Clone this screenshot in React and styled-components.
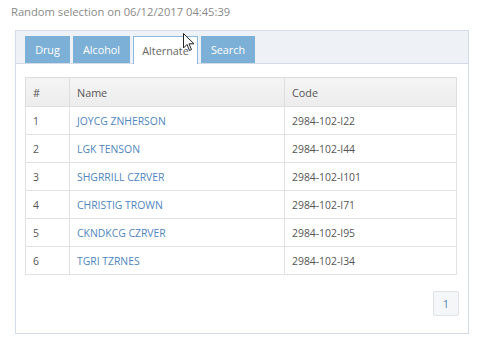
import React from "react";
import styled, { createGlobalStyle } from "styled-components";

const GlobalStyle = createGlobalStyle`
  body {
    margin: 0;
    background: #fff;
    font-family: "Open Sans", "Liberation Sans", sans-serif;
  }
`;

const Page = styled.div`
  position: relative;
  width: 497px;
  height: 349px;
  padding: 3px 0 0 11px;
  box-sizing: border-box;
`;

const Title = styled.div`
  font-size: 11.2px;
  color: #8a8a8a;
  line-height: 17px;
`;

const Panel = styled.div`
  margin: 10px 0 0 4px;
  width: 454px;
  height: 304px;
  box-sizing: border-box;
  border: 1px solid #d3dce8;
  display: flex;
  flex-direction: column;
`;

const TabBar = styled.div`
  height: 33px;
  box-sizing: border-box;
  background: #eef2f7;
  border-bottom: 1px solid #d3dce8;
  padding: 6px 0 0 9px;
  display: flex;
  align-items: flex-end;
  gap: 3px;
`;

const Tab = styled.div`
  width: ${(p) => p.$w}px;
  height: ${(p) => (p.$active ? "28px" : "27px")};
  margin-bottom: ${(p) => (p.$active ? "-1px" : "0")};
  box-sizing: border-box;
  display: flex;
  align-items: center;
  justify-content: center;
  font-size: 10.8px;
  color: ${(p) => (p.$active ? "#666" : "#fff")};
  background: ${(p) => (p.$active ? "#fff" : "#7cb0d6")};
  border: 1px solid ${(p) => (p.$active ? "#8dbbe0" : "#7cb0d6")};
  border-bottom: ${(p) => (p.$active ? "none" : "1px solid #7cb0d6")};
`;

const Body = styled.div`
  padding: 13px 0 0 9px;
  display: flex;
  flex-direction: column;
`;

const Table = styled.table`
  width: 432px;
  border-collapse: collapse;
  font-size: 10.4px;
  color: #555;
`;

const Th = styled.th`
  height: 29px;
  box-sizing: border-box;
  text-align: left;
  font-weight: 400;
  font-size: 10.8px;
  padding: 0 7px;
  background: linear-gradient(#f5f5f5, #ececec);
  border: 1px solid #dedede;
  width: ${(p) => p.$w}px;
`;

const Td = styled.td`
  height: 28px;
  box-sizing: border-box;
  padding: 0 7px;
  border: 1px solid #e2e2e2;
`;

const NameLink = styled.a`
  color: #4f86c0;
  text-decoration: none;
`;

const Pager = styled.div`
  display: flex;
  justify-content: flex-end;
  padding: 16px 9px 0 0;
`;

const PageButton = styled.div`
  width: 26px;
  height: 25px;
  box-sizing: border-box;
  display: flex;
  align-items: center;
  justify-content: center;
  font-size: 11px;
  color: #4f86c0;
  background: #f5f6f8;
  border: 1px solid #dfe3e8;
  border-radius: 2px;
`;

const Cursor = styled.svg`
  position: absolute;
  left: 183px;
  top: 33px;
`;

const rows = [
  ["1", "JOYCG ZNHERSON", "2984-102-I22"],
  ["2", "LGK TENSON", "2984-102-I44"],
  ["3", "SHGRRILL CZRVER", "2984-102-I101"],
  ["4", "CHRISTIG TROWN", "2984-102-I71"],
  ["5", "CKNDKCG CZRVER", "2984-102-I95"],
  ["6", "TGRI TZRNES", "2984-102-I34"],
];

const tabs = [
  { label: "Drug", w: 45 },
  { label: "Alcohol", w: 57 },
  { label: "Alternate", w: 65, active: true },
  { label: "Search", w: 54 },
];

export default function App() {
  return (
    <>
      <GlobalStyle />
      <Page>
        <Title>Random selection on 06/12/2017 04:45:39</Title>
        <Panel>
          <TabBar>
            {tabs.map((t) => (
              <Tab key={t.label} $active={t.active} $w={t.w}>
                {t.label}
              </Tab>
            ))}
          </TabBar>
          <Body>
            <Table>
              <thead>
                <tr>
                  <Th $w={44}>#</Th>
                  <Th $w={215}>Name</Th>
                  <Th>Code</Th>
                </tr>
              </thead>
              <tbody>
                {rows.map((r) => (
                  <tr key={r[0]}>
                    <Td>{r[0]}</Td>
                    <Td>
                      <NameLink href="#">{r[1]}</NameLink>
                    </Td>
                    <Td>{r[2]}</Td>
                  </tr>
                ))}
              </tbody>
            </Table>
            <Pager>
              <PageButton>1</PageButton>
            </Pager>
          </Body>
        </Panel>
        <Cursor width="12" height="19" viewBox="0 0 12 19">
          <path
            d="M0.5 0.5 L0.5 15 L4 11.5 L6.5 17.5 L8.5 16.6 L6 10.8 L11 10.8 Z"
            fill="#fff"
            stroke="#222"
            strokeWidth="1"
            strokeLinejoin="round"
          />
        </Cursor>
      </Page>
    </>
  );
}
